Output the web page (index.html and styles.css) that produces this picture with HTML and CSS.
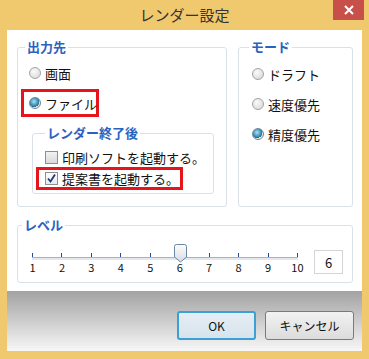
FILE: index.html
```html
<!DOCTYPE html>
<html lang="ja">
<head>
  <meta charset="UTF-8" />
  <title>レンダー設定</title>
  <link rel="stylesheet" href="styles.css">
</head>
<body>
  <div class="window">
    <div class="titlebar">
      <span class="titlebar__text">レンダー設定</span>
      <button class="titlebar__close">
        <svg width="10" height="10" viewBox="0 0 10 10"><path d="M1 1L9 9M9 1L1 9" stroke="#fff" stroke-width="2"/></svg>
      </button>
    </div>

    <div class="client">
      <div class="row-top">
        <!-- 出力先 -->
        <fieldset class="group group--output">
          <legend class="group__legend">出力先</legend>
          <label class="option"><span class="radio"></span>画面</label>
          <label class="option option--marked"><span class="radio radio--on"></span>ファイル</label>

          <fieldset class="group group--after">
            <legend class="group__legend">レンダー終了後</legend>
            <label class="option option--check"><span class="check"></span>印刷ソフトを起動する。</label>
            <label class="option option--check option--marked2"><span class="check check--on">
              <svg width="11" height="11" viewBox="0 0 11 11"><path d="M2 5.5L4.5 8.5L9 1.5" fill="none" stroke="#1f3a7a" stroke-width="1.8"/></svg>
            </span>提案書を起動する。</label>
          </fieldset>
        </fieldset>

        <!-- モード -->
        <fieldset class="group group--mode">
          <legend class="group__legend">モード</legend>
          <label class="option option--mode"><span class="radio"></span>ドラフト</label>
          <label class="option option--mode"><span class="radio"></span>速度優先</label>
          <label class="option option--mode"><span class="radio radio--on"></span>精度優先</label>
        </fieldset>
      </div>

      <!-- レベル -->
      <fieldset class="group group--level">
        <legend class="group__legend">レベル</legend>
        <div class="level">
          <div class="slider">
            <div class="slider__track"></div>
            <div class="slider__ticks">
              <span>1</span><span>2</span><span>3</span><span>4</span><span>5</span>
              <span>6</span><span>7</span><span>8</span><span>9</span><span>10</span>
            </div>
            <svg class="slider__thumb" width="15" height="19" viewBox="0 0 15 19">
              <defs>
                <linearGradient id="tg" x1="0" y1="0" x2="0" y2="1">
                  <stop offset="0" stop-color="#fdfdfd"/>
                  <stop offset="1" stop-color="#d6dbe2"/>
                </linearGradient>
              </defs>
              <path d="M1.5 2.5Q1.5 0.5 3.5 0.5H11.5Q13.5 0.5 13.5 2.5V13L7.5 18L1.5 13Z" fill="url(#tg)" stroke="#6a88a6"/>
            </svg>
          </div>
          <div class="level__value">6</div>
        </div>
      </fieldset>
    </div>

    <div class="footer">
      <button class="btn btn--default">OK</button>
      <button class="btn">キャンセル</button>
    </div>
  </div>
</body>
</html>
```

FILE: styles.css
```css
*{margin:0;padding:0;box-sizing:border-box;}
body{
  font-family:"Noto Sans CJK JP","Noto Sans",sans-serif;
  background:#f0c86d;
  width:369px;height:359px;overflow:hidden;
}
.window{display:flex;flex-direction:column;height:359px;}

/* title bar */
.titlebar{
  height:30px;position:relative;
  display:flex;align-items:center;justify-content:center;
}
.titlebar__text{font-size:15px;color:#333;margin-top:-1px;}
.titlebar__close{
  position:absolute;top:0;right:5px;
  width:31px;height:20px;border:none;
  background:#c7504a;
  display:flex;align-items:center;justify-content:center;
}

/* client area */
.client{
  margin:0 7px;background:#fff;
  padding:9px 9px 8px 10px;
  height:261px;
}
.row-top{display:flex;gap:11px;}

.group{
  border:1px solid #d9e1e8;border-radius:3px;
  padding:0 8px;
}
.group__legend{
  color:#2a62c0;font-size:13px;font-weight:bold;
  padding:0 2px;margin-left:4px;line-height:16px;
}
.group--output{width:208px;height:168px;padding:0 12px 8px 3px;}
.group--mode{width:119px;height:168px;padding:0 8px 0 6px;}

.option{
  display:flex;align-items:center;gap:4px;white-space:nowrap;
  font-size:13px;color:#111;height:22px;
}
.group--output > .option{margin-left:8px;}
.group--output > .option:first-of-type{margin-top:7px;}
.option--marked{
  border:3px solid #e8141c;
  width:78px;height:28px;
  margin:5px 0 0 0 !important;
  padding-left:5px;
}
.group--output > .option--marked{margin-left:0;}

.option--mode{height:30px;margin-left:7px;}
.option--mode:first-of-type{margin-top:4px;}

.radio{
  width:12px;height:12px;border-radius:50%;flex:none;
  border:1px solid #a3a3a3;
  background:radial-gradient(circle at 40% 35%,#fafafa,#d4d4d4);
}
.radio--on{
  background:radial-gradient(circle at 40% 35%,#a8e4f4 0,#3c90b8 45%,#2a6e92 60%,#e6e6e6 63%);
  border-color:#6e8898;
}

/* after render */
.group--after{margin:8px 0 0 11px;height:69px;padding:0 8px 0 8px;}
.option--check{height:20px;gap:4px;margin-left:4px;font-size:13px;}
.option--check:first-of-type{margin-top:6px;}
.option--marked2{
  border:3px solid #e8141c;
  width:147px;height:23px;
  margin-left:-5px;padding-left:6px;
}
.check{
  width:13px;height:13px;flex:none;
  border:1px solid #8e8e8e;
  background:linear-gradient(#f2f2f2,#d9d9d9);
  display:flex;align-items:center;justify-content:center;
}
.check--on{background:linear-gradient(#fdfdfd,#e9e9e9);}

/* level */
.group--level{margin-top:10px;height:66px;padding:0;}
.level{display:flex;align-items:flex-start;padding:8px 0 0 14px;}
.slider{position:relative;width:266px;height:40px;margin-top:0;}
.slider__track{
  position:absolute;left:0;right:0;top:16px;height:3px;
  background:#e4e7ec;border-top:1px solid #a9b2c2;
}
.slider__ticks{
  position:absolute;left:0;right:0;top:12px;
  display:flex;justify-content:space-between;
}
.slider__ticks span{
  position:relative;width:1px;
  font-size:11px;color:#111;
  display:flex;justify-content:center;
  padding-top:7px;line-height:15px;
}
.slider__ticks span::before{
  content:"";position:absolute;left:0;top:0;
  width:1px;height:4px;background:#27469c;
}
.slider__thumb{position:absolute;left:141px;top:3px;}
.level__value{
  margin:9px 0 0 16px;
  width:29px;height:24px;
  border:1px solid #d4d4d4;
  font-size:13px;color:#111;
  display:flex;align-items:center;justify-content:center;
}

/* footer */
.footer{
  margin:0 7px;height:60px;
  background:linear-gradient(#a2a2a2,#f7f7f7);
  display:flex;justify-content:flex-end;align-items:flex-start;
  gap:9px;padding:20px 8px 0 0;
}
.btn{
  width:89px;height:29px;border-radius:3px;
  border:1px solid #7a7a7a;
  background:linear-gradient(#f2f2f2,#dcdcdc);
  font-family:inherit;font-size:12px;color:#111;
}
.btn--default{
  width:79px;
  border:2px solid #3aa0d6;
  background:linear-gradient(#e6eef4,#d7e3ec);
}
```
